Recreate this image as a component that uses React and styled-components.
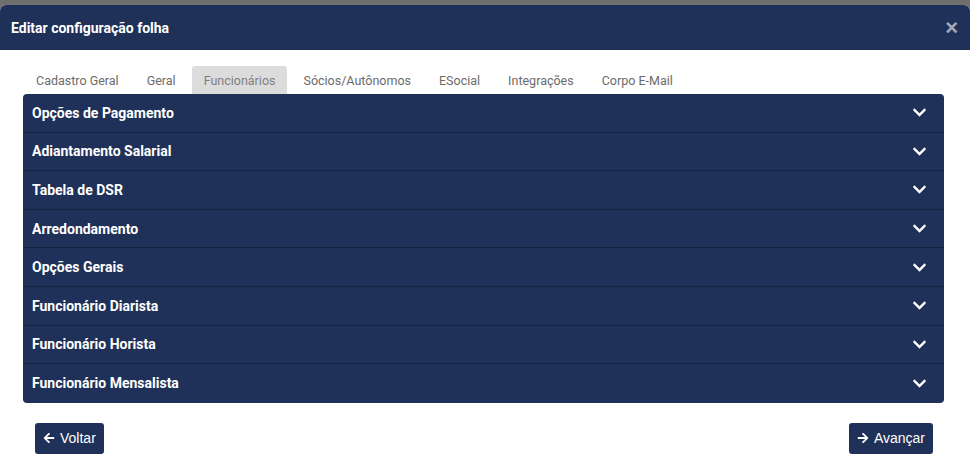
import React, { useState } from 'react';
import styled, { createGlobalStyle } from 'styled-components';
import { FaChevronDown, FaArrowLeft, FaArrowRight } from 'react-icons/fa';

const GlobalStyle = createGlobalStyle`
  html, body {
    margin: 0;
    padding: 0;
    background: #ffffff;
    font-family: Roboto, "Liberation Sans", Arial, sans-serif;
  }
  * {
    box-sizing: border-box;
  }
`;

const tabs = [
  'Cadastro Geral',
  'Geral',
  'Funcionários',
  'Sócios/Autônomos',
  'ESocial',
  'Integrações',
  'Corpo E-Mail',
];

const sections = [
  'Opções de Pagamento',
  'Adiantamento Salarial',
  'Tabela de DSR',
  'Arredondamento',
  'Opções Gerais',
  'Funcionário Diarista',
  'Funcionário Horista',
  'Funcionário Mensalista',
];

const App = () => {
  const [active, setActive] = useState(2);

  return (
    <>
      <GlobalStyle />
      <Backdrop>
        <Modal>
          <ModalHeader>
            <ModalTitle>Editar configuração folha</ModalTitle>
            <CloseButton>×</CloseButton>
          </ModalHeader>

          <ModalBody>
            <TabList>
              {tabs.map((tab, i) => (
                <Tab key={tab} $active={i === active} onClick={() => setActive(i)}>
                  {tab}
                </Tab>
              ))}
            </TabList>

            <Accordion>
              {sections.map((section) => (
                <AccordionRow key={section}>
                  <RowTitle>{section}</RowTitle>
                  <FaChevronDown size={15} />
                </AccordionRow>
              ))}
            </Accordion>

            <Footer>
              <NavButton>
                <FaArrowLeft size={12} />
                Voltar
              </NavButton>
              <NavButton>
                <FaArrowRight size={12} />
                Avançar
              </NavButton>
            </Footer>
          </ModalBody>
        </Modal>
      </Backdrop>
    </>
  );
};

export default App;

const Backdrop = styled.div`
  background: linear-gradient(#6f6f6f, #8a8a8a);
  padding-top: 5px;
  min-height: 464px;
  display: flex;
  flex-direction: column;
`;

const Modal = styled.div`
  flex: 1;
  background: #ffffff;
  border-radius: 6px 6px 0 0;
  overflow: hidden;
`;

const ModalHeader = styled.div`
  height: 45px;
  background: #1f3158;
  display: flex;
  align-items: center;
  justify-content: space-between;
  padding: 0 12px 0 11px;
`;

const ModalTitle = styled.h2`
  margin: 0;
  color: #ffffff;
  font-size: 14px;
  font-weight: 700;
`;

const CloseButton = styled.span`
  color: #a3abbb;
  font-family: "Liberation Sans", Arial, sans-serif;
  font-size: 22px;
  font-weight: 700;
  line-height: 1;
  margin-top: 1px;
  cursor: pointer;
`;

const ModalBody = styled.div`
  padding: 16px 26px 0 23px;
`;

const TabList = styled.div`
  display: flex;
  height: 28px;
  padding-left: 1px;
  gap: 4px;
`;

const Tab = styled.div`
  display: flex;
  align-items: center;
  padding: 0 12px;
  font-size: 12.5px;
  color: ${(p) => (p.$active ? '#808080' : '#6b6b6b')};
  background: ${(p) => (p.$active ? '#dcdcdc' : 'transparent')};
  border-radius: 3px 3px 0 0;
  cursor: pointer;
`;

const Accordion = styled.div`
  background: #1f3158;
  border-radius: 4px;
  overflow: hidden;
`;

const AccordionRow = styled.div`
  height: 38.6px;
  display: flex;
  align-items: center;
  justify-content: space-between;
  padding: 0 17px 0 9px;
  color: #ffffff;
  cursor: pointer;

  &:not(:last-of-type) {
    border-bottom: 1px solid #16233f;
  }
`;

const RowTitle = styled.span`
  font-size: 14px;
  font-weight: 700;
`;

const Footer = styled.div`
  display: flex;
  justify-content: space-between;
  padding: 20px 11px 0 12px;
`;

const NavButton = styled.button`
  height: 31px;
  display: flex;
  align-items: center;
  gap: 5px;
  padding: 0 8px;
  background: #1f3158;
  color: #ffffff;
  border: none;
  border-radius: 3px;
  font-family: "Liberation Sans", Arial, sans-serif;
  font-size: 14px;
  cursor: pointer;
`;
